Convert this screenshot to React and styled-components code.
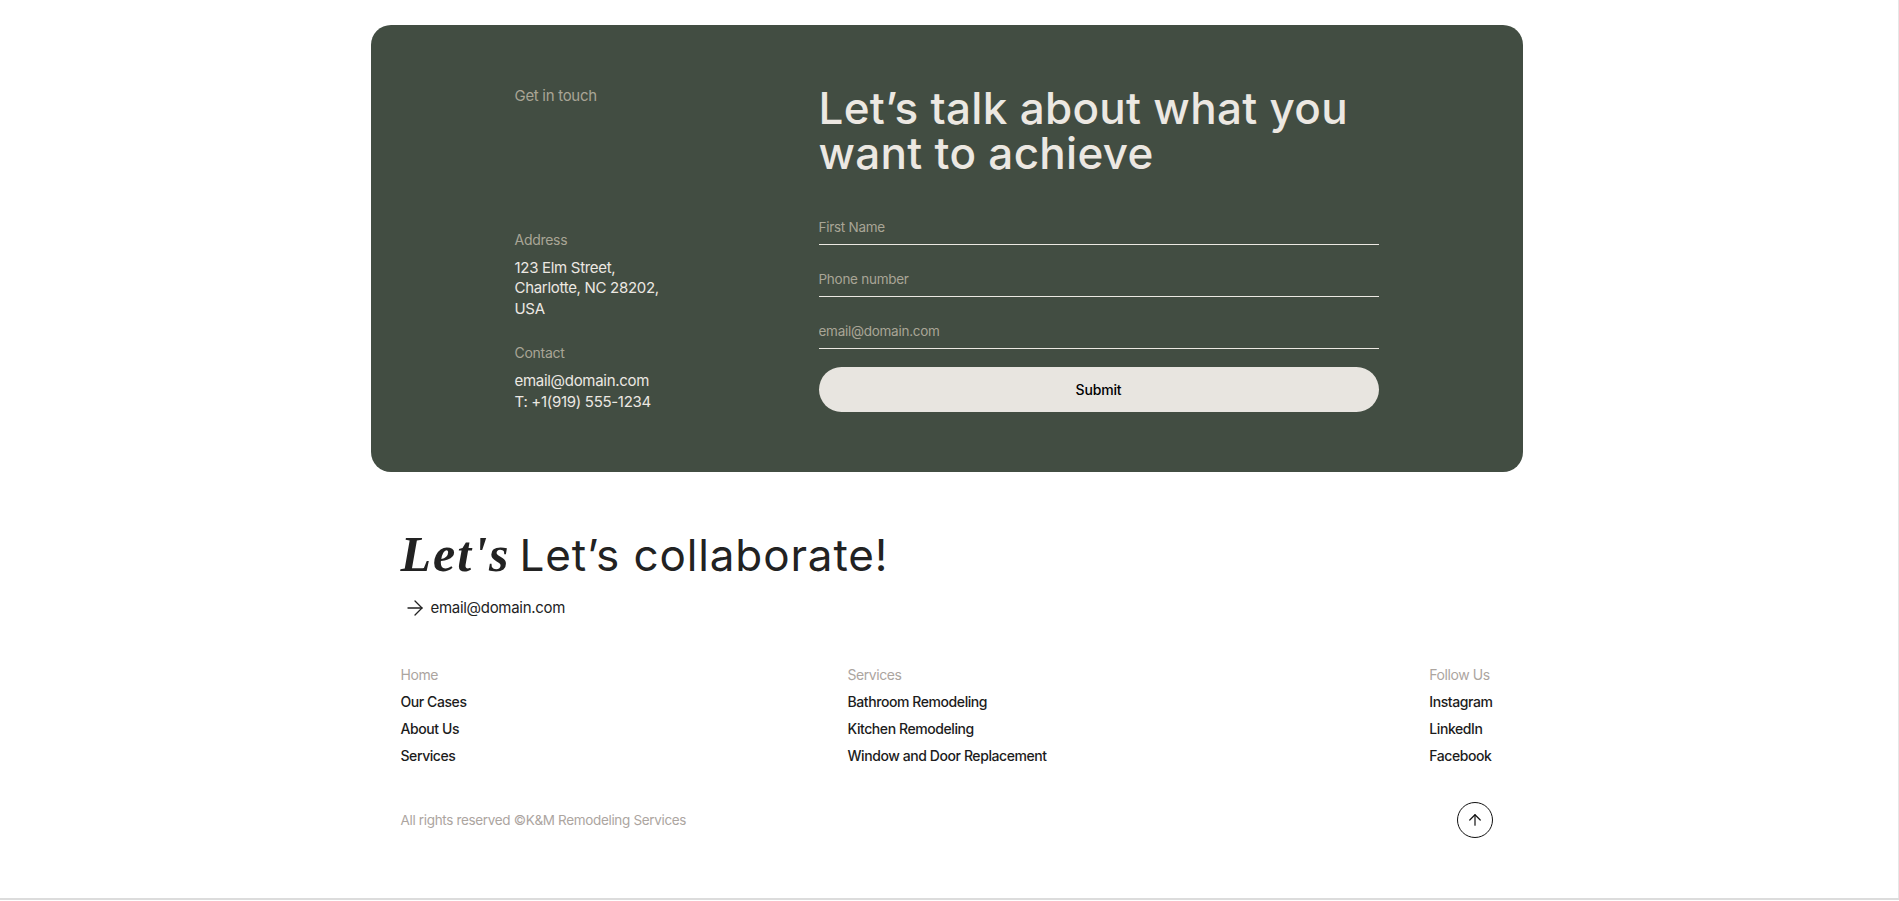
import React from "react";
import styled, { createGlobalStyle } from "styled-components";
import { ArrowRight, ArrowUp } from "lucide-react";

const GlobalStyle = createGlobalStyle`
  body {
    margin: 0;
    background: #ffffff;
    font-family: Inter, "Open Sans", Arial, sans-serif;
    color: #1f1f1f;
  }
  * {
    box-sizing: border-box;
  }
`;

const Page = styled.div`
  width: 1899px;
  display: flex;
  flex-direction: column;
  align-items: center;
  padding-right: 5px;
  border-right: 1px solid #e6e6e6;
`;

const ContactCard = styled.section`
  width: 1152px;
  margin-top: 25px;
  background: #424d42;
  border-radius: 20px;
  padding: 61px 144px 60px 144px;
  display: grid;
  grid-template-columns: 304px 1fr;
`;

const LeftCol = styled.div`
  display: flex;
  flex-direction: column;
  justify-content: space-between;
`;

const Eyebrow = styled.div`
  font-size: 15px;
  line-height: 20px;
  color: #a9a596;
  letter-spacing: -0.02em;
`;

const InfoBlock = styled.div`
  display: flex;
  flex-direction: column;
  gap: 24px;
`;

const InfoGroup = styled.div`
  display: flex;
  flex-direction: column;
  gap: 8px;
`;

const InfoLabel = styled.div`
  font-size: 14px;
  line-height: 20px;
  color: #a9a596;
  letter-spacing: -0.02em;
`;

const InfoText = styled.div`
  font-size: 15px;
  line-height: 20.5px;
  color: #ece8e2;
  letter-spacing: -0.02em;
`;

const RightCol = styled.div`
  display: flex;
  flex-direction: column;
`;

const Heading = styled.h2`
  margin: 0 0 29px;
  font-size: 44px;
  line-height: 45px;
  font-weight: 500;
  letter-spacing: 0.3px;
  color: #ece8e2;
`;

const Form = styled.form`
  display: flex;
  flex-direction: column;
  gap: 12px;
`;

const Field = styled.input`
  width: 100%;
  height: 40px;
  padding: 12px 0 7px;
  border: none;
  border-bottom: 1px solid #ece8e2;
  background: transparent;
  font-family: inherit;
  font-size: 13.5px;
  line-height: 20px;
  letter-spacing: -0.02em;
  color: #ece8e2;
  outline: none;

  &::placeholder {
    color: #a9a596;
  }
`;

const SubmitButton = styled.button`
  margin-top: 6px;
  height: 45px;
  border: none;
  border-radius: 999px;
  background: #e8e5e0;
  font-family: inherit;
  font-size: 14px;
  font-weight: 500;
  letter-spacing: -0.01em;
  color: #000;
  cursor: pointer;
`;

const Footer = styled.footer`
  width: 1152px;
  padding: 0 30px 60px;
  display: flex;
  flex-direction: column;
`;

const Collaborate = styled.h2`
  margin: 56px 0 0;
  font-size: 44px;
  line-height: 52px;
  font-weight: 400;
  letter-spacing: 0.02em;
  color: #222;
  display: flex;
  align-items: baseline;
  gap: 9px;
`;

const SerifWord = styled.span`
  font-family: "Liberation Serif", "DejaVu Serif", serif;
  font-style: italic;
  font-weight: 700;
  font-size: 50px;
  letter-spacing: 2px;
  color: #222;
`;

const MailRow = styled.a`
  margin-top: 15px;
  padding-left: 2px;
  display: flex;
  align-items: center;
  gap: 4px;
  font-size: 15px;
  line-height: 24px;
  letter-spacing: -0.02em;
  color: #222;
  text-decoration: none;
`;

const Columns = styled.div`
  margin-top: 45px;
  display: grid;
  grid-template-columns: 447px 1fr auto;
`;

const Column = styled.div`
  display: flex;
  flex-direction: column;
  gap: 7px;
`;

const ColumnTitle = styled.div`
  font-size: 14px;
  line-height: 20px;
  letter-spacing: -0.03em;
  color: #aca59f;
`;

const ColumnLink = styled.a`
  font-size: 14px;
  line-height: 20px;
  font-weight: 500;
  letter-spacing: -0.03em;
  color: #1c1c1c;
  text-decoration: none;
`;

const BottomRow = styled.div`
  margin-top: 36px;
  display: flex;
  justify-content: space-between;
  align-items: center;
`;

const Copyright = styled.div`
  font-size: 13.5px;
  line-height: 20px;
  letter-spacing: -0.025em;
  color: #aca59f;
`;

const UpButton = styled.button`
  width: 36px;
  height: 36px;
  border: 1px solid #111;
  border-radius: 50%;
  background: transparent;
  display: flex;
  align-items: center;
  justify-content: center;
  padding: 0;
  color: #111;
  cursor: pointer;
`;

const BottomStrip = styled.div`
  width: 1899px;
  height: 2px;
  background: #dcdcdc;
`;

const pages = ["Our Cases", "About Us", "Services"];
const services = [
  "Bathroom Remodeling",
  "Kitchen Remodeling",
  "Window and Door Replacement",
];
const socials = ["Instagram", "LinkedIn", "Facebook"];

export default function App() {
  return (
    <>
      <GlobalStyle />
      <Page>
        <ContactCard>
          <LeftCol>
            <Eyebrow>Get in touch</Eyebrow>
            <InfoBlock>
              <InfoGroup>
                <InfoLabel>Address</InfoLabel>
                <InfoText>
                  123 Elm Street,
                  <br />
                  Charlotte, NC 28202,
                  <br />
                  USA
                </InfoText>
              </InfoGroup>
              <InfoGroup>
                <InfoLabel>Contact</InfoLabel>
                <InfoText>
                  email@domain.com
                  <br />
                  T: +1(919) 555-1234
                </InfoText>
              </InfoGroup>
            </InfoBlock>
          </LeftCol>
          <RightCol>
            <Heading>
              Let’s talk about what you
              <br />
              want to achieve
            </Heading>
            <Form onSubmit={(e) => e.preventDefault()}>
              <Field placeholder="First Name" />
              <Field placeholder="Phone number" />
              <Field placeholder="email@domain.com" />
              <SubmitButton type="submit">Submit</SubmitButton>
            </Form>
          </RightCol>
        </ContactCard>

        <Footer>
          <Collaborate>
            <SerifWord>Let's</SerifWord>
            Let’s collaborate!
          </Collaborate>
          <MailRow href="#">
            <ArrowRight size={24} strokeWidth={1.3} />
            email@domain.com
          </MailRow>
          <Columns>
            <Column>
              <ColumnTitle>Home</ColumnTitle>
              {pages.map((p) => (
                <ColumnLink key={p} href="#">
                  {p}
                </ColumnLink>
              ))}
            </Column>
            <Column>
              <ColumnTitle>Services</ColumnTitle>
              {services.map((s) => (
                <ColumnLink key={s} href="#">
                  {s}
                </ColumnLink>
              ))}
            </Column>
            <Column>
              <ColumnTitle>Follow Us</ColumnTitle>
              {socials.map((s) => (
                <ColumnLink key={s} href="#">
                  {s}
                </ColumnLink>
              ))}
            </Column>
          </Columns>
          <BottomRow>
            <Copyright>All rights reserved ©K&amp;M Remodeling Services</Copyright>
            <UpButton aria-label="Back to top">
              <ArrowUp size={18} strokeWidth={1.6} />
            </UpButton>
          </BottomRow>
        </Footer>
      </Page>
      <BottomStrip />
    </>
  );
}
